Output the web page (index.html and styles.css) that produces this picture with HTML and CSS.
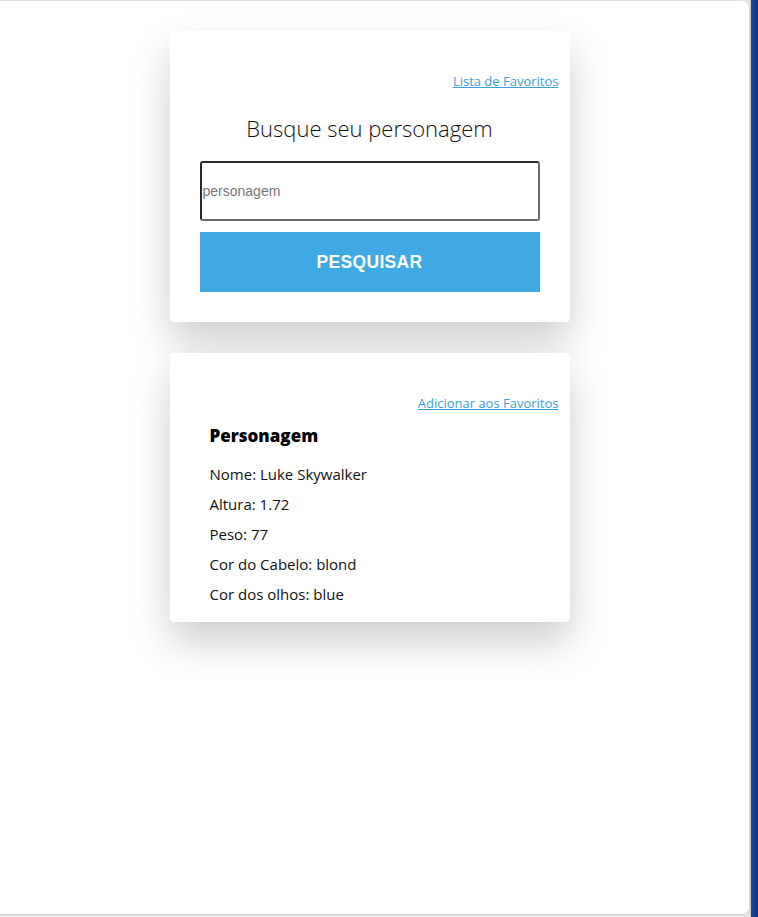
FILE: index.html
```html
<!DOCTYPE html>
<html lang="pt-BR">
<head>
<meta charset="utf-8">
<title>Busque seu personagem</title>
<link rel="stylesheet" href="styles.css">
</head>
<body>
<div class="screen">
  <main class="frame">
    <section class="card search-card">
      <div class="card-links"><a href="#" class="link">Lista de Favoritos</a></div>
      <h1 class="title">Busque seu personagem</h1>
      <input class="search-input" type="text" placeholder="personagem">
      <button class="search-btn" type="button">PESQUISAR</button>
    </section>
    <section class="card result-card">
      <div class="card-links"><a href="#" class="link">Adicionar aos Favoritos</a></div>
      <div class="info">
        <h2 class="info-title">Personagem</h2>
        <p class="info-line">Nome: Luke Skywalker</p>
        <p class="info-line">Altura: 1.72</p>
        <p class="info-line">Peso: 77</p>
        <p class="info-line">Cor do Cabelo: blond</p>
        <p class="info-line">Cor dos olhos: blue</p>
      </div>
    </section>
  </main>
  <div class="gutter"></div>
  <div class="strip"></div>
</div>
</body>
</html>
```

FILE: styles.css
```css
html, body {
  margin: 0;
  padding: 0;
  height: 100%;
}
body {
  background: #e4e4e4;
  font-family: "Open Sans", "Noto Sans", sans-serif;
  color: #111;
}
.screen {
  display: flex;
  height: 917px;
  overflow: hidden;
}
.frame {
  box-sizing: border-box;
  width: 750px;
  height: 915px;
  background: #fff;
  border-top: 1px solid #dedede;
  border-right: 1px solid #d6d6d6;
  border-bottom: 1px solid #d6d6d6;
  border-radius: 0 8px 8px 0;
  display: flex;
  flex-direction: column;
  align-items: center;
  padding-top: 30px;
  padding-right: 10px;
  gap: 31px;
}
.gutter {
  width: 1px;
  background: #c8c8c8;
}
.strip {
  flex: 1;
  background: linear-gradient(to right, #1a47a8, #0d3389);
}
.card {
  box-sizing: border-box;
  width: 400px;
  background: #fff;
  border-radius: 4px;
  box-shadow: 0 20px 40px rgba(0, 0, 0, 0.2);
}
.card-links {
  display: flex;
  justify-content: flex-end;
  padding-right: 11px;
}
.link {
  font-size: 13px;
  color: #3a9fd6;
  text-decoration: underline;
  line-height: 18px;
}
.search-card {
  padding: 41px 30px 30px;
  display: flex;
  flex-direction: column;
}
.search-card .card-links {
  margin-right: -30px;
}
.title {
  margin: 23px 0 18px;
  font-size: 22px;
  font-weight: 300;
  text-align: center;
  line-height: 30px;
  color: #111;
}
.search-input {
  box-sizing: border-box;
  width: 340px;
  height: 60px;
  border: 2px solid #2a2a2a;
  border-right-color: #6b6b6b;
  border-bottom-color: #6b6b6b;
  border-radius: 3px;
  padding: 0 1px;
  font-family: "Liberation Sans", Arial, sans-serif;
  font-size: 14px;
  color: #333;
  outline: none;
}
.search-input::placeholder {
  color: #777;
}
.search-btn {
  margin-top: 11px;
  width: 340px;
  height: 60px;
  border: none;
  background: #3ea9e2;
  color: #fff;
  font-family: "Liberation Sans", Arial, sans-serif;
  font-weight: 700;
  font-size: 17.5px;
  letter-spacing: 0.3px;
}
.result-card {
  padding: 41px 0 13px;
}
.info {
  padding: 13px 40px 0;
}
.info-title {
  margin: 0 0 12px;
  font-size: 17px;
  font-weight: 800;
  line-height: 22px;
  color: #000;
}
.info-line {
  margin: 0;
  font-size: 15px;
  line-height: 30px;
  color: #111;
}
```
